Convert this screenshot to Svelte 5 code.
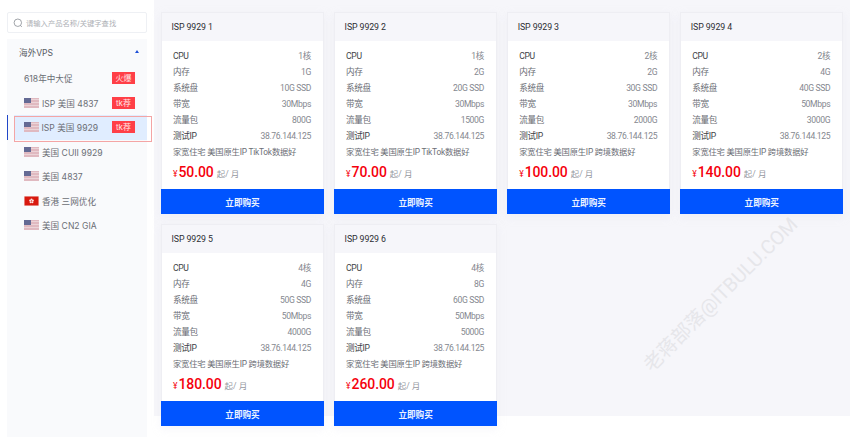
<script>
  const menu = [
    { name: "618年中大促", tag: "火爆" },
    { name: "ISP 美国 4837", flag: "us", tag: "tk荐" },
    { name: "ISP 美国 9929", flag: "us", tag: "tk荐", active: true },
    { name: "美国 CUII 9929", flag: "us" },
    { name: "美国 4837", flag: "us" },
    { name: "香港 三网优化", flag: "hk" },
    { name: "美国 CN2 GIA", flag: "us" }
  ];

  const plans = [
    { id: 1, cpu: 1, mem: "1G", disk: "10G SSD", bw: "30Mbps", traffic: "800G", note: "家宽住宅 美国原生IP TikTok数据好", price: "50.00" },
    { id: 2, cpu: 1, mem: "2G", disk: "20G SSD", bw: "30Mbps", traffic: "1500G", note: "家宽住宅 美国原生IP TikTok数据好", price: "70.00" },
    { id: 3, cpu: 2, mem: "2G", disk: "30G SSD", bw: "30Mbps", traffic: "2000G", note: "家宽住宅 美国原生IP 跨境数据好", price: "100.00" },
    { id: 4, cpu: 2, mem: "4G", disk: "40G SSD", bw: "50Mbps", traffic: "3000G", note: "家宽住宅 美国原生IP 跨境数据好", price: "140.00" },
    { id: 5, cpu: 4, mem: "4G", disk: "50G SSD", bw: "50Mbps", traffic: "4000G", note: "家宽住宅 美国原生IP 跨境数据好", price: "180.00" },
    { id: 6, cpu: 4, mem: "8G", disk: "60G SSD", bw: "50Mbps", traffic: "5000G", note: "家宽住宅 美国原生IP 跨境数据好", price: "260.00" }
  ];
</script>

<div class="page">
  <aside class="sidebar">
    <div class="search">
      <svg width="10" height="10" viewBox="0 0 11 11" fill="none" stroke="#8b8f96" stroke-width="0.9">
        <circle cx="5.3" cy="5.2" r="4.1" />
        <path d="M8.2 8.2l1.5 1.6" />
      </svg>
      <span>请输入产品名称/关键字查找</span>
    </div>
    <nav class="menu">
      <div class="menu-head">
        <span>海外VPS</span>
        <i class="caret"></i>
      </div>
      {#each menu as item}
        <div class="item" class:active={item.active}>
          {#if item.flag === "us"}
            <svg class="flag" viewBox="0 0 15 10">
              <rect width="15" height="10" fill="#e0b9c0" />
              <path d="M0 1.5h15M0 4.5h15M0 7.5h15" stroke="#ebd3d7" stroke-width="1" />
              <rect width="7" height="5" fill="#646a94" />
            </svg>
          {:else if item.flag === "hk"}
            <svg class="flag" viewBox="0 0 15 10">
              <rect width="15" height="10" fill="#f3e4e2" />
              <rect x="0.5" y="0.5" width="14" height="9" fill="#d8190f" />
              <g fill="#fbe3e0">
                <circle cx="7.5" cy="3.6" r="1" />
                <circle cx="8.9" cy="4.6" r="1" />
                <circle cx="8.4" cy="6.2" r="1" />
                <circle cx="6.6" cy="6.2" r="1" />
                <circle cx="6.1" cy="4.6" r="1" />
              </g>
            </svg>
          {/if}
          <span class="item-name">{item.name}</span>
          {#if item.tag}<span class="tag">{item.tag}</span>{/if}
        </div>
      {/each}
    </nav>
  </aside>

  <main class="main">
    <div class="grid">
      {#each plans as plan}
        <section class="card">
          <header>ISP 9929 {plan.id}</header>
          <div class="body">
            <div class="row"><span class="key">CPU</span><span>{plan.cpu}核</span></div>
            <div class="row"><span>内存</span><span>{plan.mem}</span></div>
            <div class="row"><span>系统盘</span><span>{plan.disk}</span></div>
            <div class="row"><span>带宽</span><span>{plan.bw}</span></div>
            <div class="row"><span>流量包</span><span>{plan.traffic}</span></div>
            <div class="row"><span class="key">测试IP</span><span>38.76.144.125</span></div>
            <div class="note">{plan.note}</div>
            <div class="price">
              <small>¥</small><b>{plan.price}</b><span>起/ 月</span>
            </div>
          </div>
          <button>立即购买</button>
        </section>
      {/each}
    </div>
  </main>

  <div class="highlight"></div>
  <div class="watermark">老蒋部落@ITBULU.COM</div>
</div>

<style>
  :global(body) {
    margin: 0;
    background: #fff;
    overflow: hidden;
  }

  .page {
    position: relative;
    display: flex;
    align-items: flex-start;
    width: 850px;
    height: 437px;
    overflow: hidden;
    font-family: Roboto, "Noto Sans CJK SC", sans-serif;
  }

  .sidebar {
    box-sizing: border-box;
    flex: 0 0 154px;
    height: 437px;
    padding: 12px 7px 0;
    font-family: Inter, "Noto Sans CJK SC", sans-serif;
  }

  .search {
    box-sizing: border-box;
    display: flex;
    align-items: center;
    gap: 3px;
    height: 21px;
    padding-left: 5px;
    border: 1px solid #eef0f4;
    border-radius: 2px;
    font-size: 7.3px;
    color: #aeb1b6;
  }

  .menu {
    margin-top: 6px;
    height: 399px;
    background: #f9fafc;
  }

  .menu-head {
    box-sizing: border-box;
    display: flex;
    align-items: center;
    justify-content: space-between;
    height: 27px;
    padding: 0 8px 1.5px 12px;
    font-size: 8.6px;
    color: #55585f;
  }

  .caret {
    width: 0;
    height: 0;
    border-left: 2.5px solid transparent;
    border-right: 2.5px solid transparent;
    border-bottom: 3px solid #1d4fd8;
  }

  .item {
    box-sizing: border-box;
    display: flex;
    align-items: center;
    height: 24.5px;
    padding: 0 12px 0 17px;
    font-size: 8.6px;
    color: #6b6e75;
  }

  .item.active {
    background: linear-gradient(#e0edff, #e0edff) 5.5px 0 no-repeat;
    border-left: 1.5px solid #2046c8;
    padding-left: 15.5px;
  }

  .flag {
    flex: none;
    width: 15px;
    height: 10px;
    margin-right: 3px;
  }

  .item-name {
    flex: 1;
    white-space: nowrap;
  }

  .tag {
    width: 23px;
    height: 12px;
    background: #ff3f47;
    color: #ffe4e5;
    font-size: 8px;
    line-height: 12px;
    text-align: center;
  }

  .main {
    box-sizing: border-box;
    flex: 1;
    height: 416px;
    padding: 12px 0 0 7px;
    background: #f6f6fa;
  }

  .grid {
    display: grid;
    grid-template-columns: repeat(4, 163px);
    column-gap: 10.1px;
    row-gap: 10px;
  }

  .card {
    box-sizing: border-box;
    height: 202px;
    display: flex;
    flex-direction: column;
    background: #fff;
    border: 1px solid #eeeef3;
    border-bottom: none;
    box-shadow: 0 3px 8px rgba(225, 225, 238, 0.35);
  }

  .card header {
    flex: none;
    height: 28px;
    padding-left: 9.5px;
    background: #f6f6fa;
    font-size: 8.8px;
    letter-spacing: -0.1px;
    line-height: 28px;
    color: #2c2e33;
  }

  .body {
    flex: 1;
    padding: 6.5px 12px 0 11px;
  }

  .row {
    display: flex;
    justify-content: space-between;
    height: 16px;
    font-size: 8.6px;
    letter-spacing: -0.35px;
    line-height: 16px;
    color: #85888f;
  }

  .row span:first-child {
    color: #6b6e75;
  }

  .row .key {
    color: #3d3f45 !important;
  }

  .note {
    height: 16px;
    font-size: 8.3px;
    letter-spacing: -0.2px;
    line-height: 16px;
    color: #6b6e75;
    white-space: nowrap;
  }

  .price {
    margin-top: 2.5px;
    display: flex;
    align-items: baseline;
    color: #f5000c;
  }

  .price small {
    font-size: 8.5px;
    margin-right: 1px;
  }

  .price b {
    font-weight: 500;
    font-size: 14px;
    letter-spacing: -0.1px;
    line-height: 20px;
  }

  .price span {
    margin-left: 3px;
    font-size: 8.5px;
    color: #95989f;
  }

  button {
    flex: none;
    height: 25px;
    margin: 0 -1px;
    padding: 0;
    border: none;
    background: #0054ff;
    color: #eef4ff;
    font-family: inherit;
    font-size: 8.6px;
    font-weight: 700;
    cursor: pointer;
  }

  .highlight {
    position: absolute;
    left: 14px;
    top: 116px;
    width: 136px;
    height: 24px;
    border: 1px solid #f4a5a5;
  }

  .watermark {
    position: absolute;
    left: 611px;
    top: 284px;
    width: 220px;
    text-align: center;
    white-space: nowrap;
    font-size: 19.5px;
    line-height: 22px;
    color: #e6e6ea;
    transform: rotate(-45deg);
  }
</style>
